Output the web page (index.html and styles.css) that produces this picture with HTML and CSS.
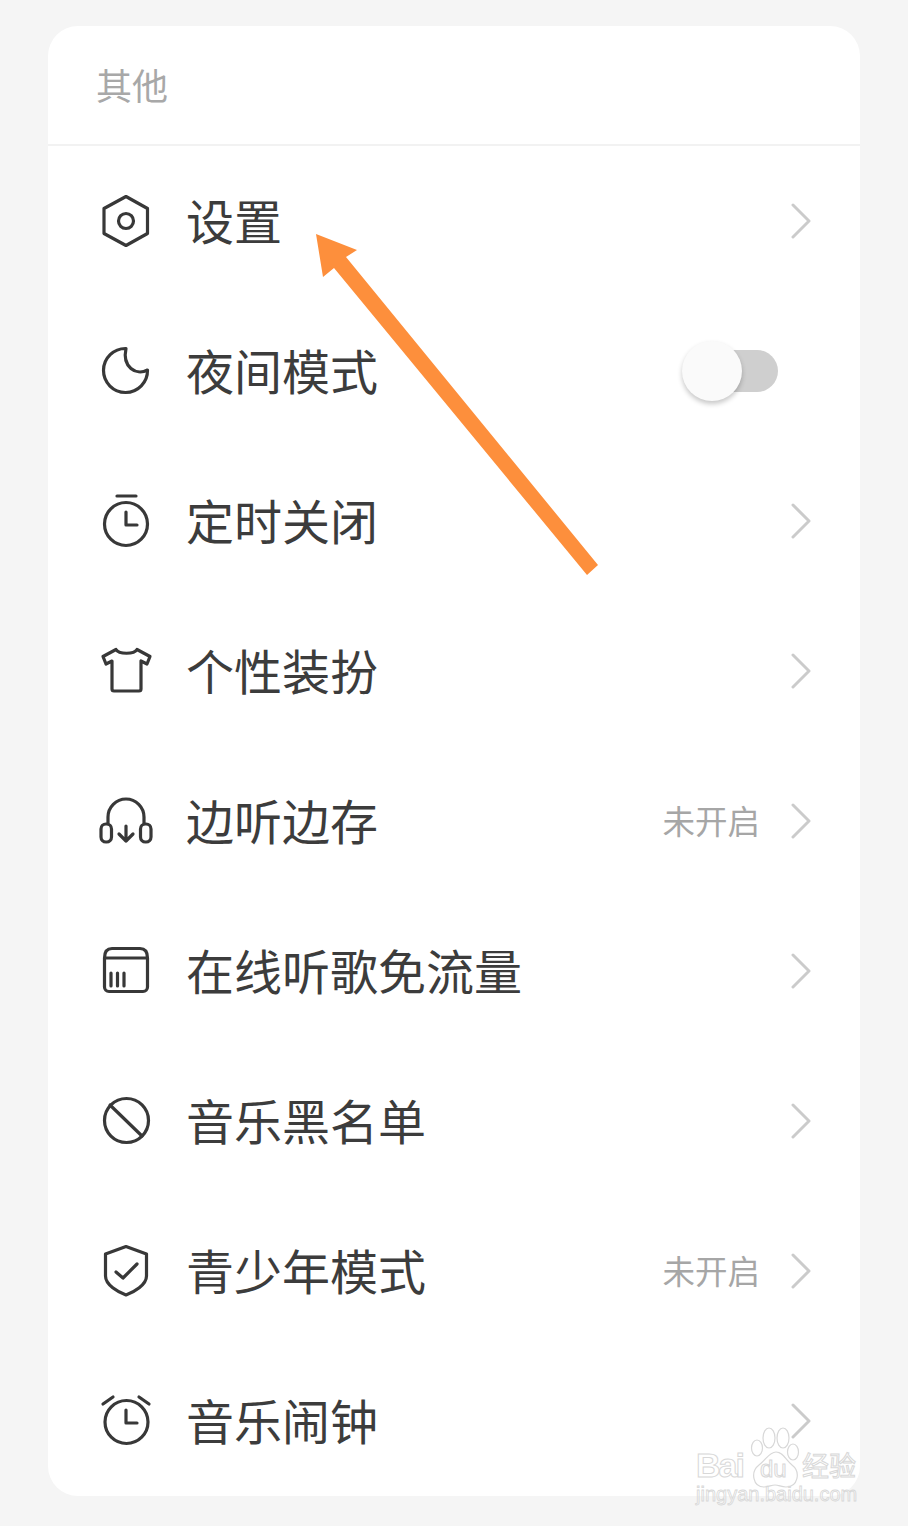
FILE: index.html
```html
<!DOCTYPE html>
<html lang="zh-CN">
<head>
    <meta charset="UTF-8">
    <meta name="viewport" content="width=device-width, initial-scale=1.0">
    <title>其他</title>
    <link rel="stylesheet" href="styles.css">
</head>
<body>
    <div class="card">
        <div class="card-title">其他</div>

        <div class="row">
            <svg class="icon" viewBox="0 0 56 56"><path d="M28 3.5 L49.5 15.5 V40.5 L28 52.5 L6 40.5 V15.5 Z"/><circle cx="28" cy="28" r="7.5"/></svg>
            <span class="row-label">设置</span>
            <svg class="chevron" viewBox="0 0 20 36"><path d="M2 2 L18 18 L2 34"/></svg>
        </div>

        <div class="row">
            <svg class="icon" viewBox="0 0 56 56"><path d="M28 5.5 A22 22 0 1 0 49.5 27 C38 33 24 24 28 5.5 Z"/></svg>
            <span class="row-label">夜间模式</span>
            <div class="toggle"><div class="toggle-knob"></div></div>
        </div>

        <div class="row">
            <svg class="icon" viewBox="0 0 56 56"><path d="M19 3 H38"/><circle cx="28" cy="31" r="21.5"/><path d="M28 19 V32 H39"/></svg>
            <span class="row-label">定时关闭</span>
            <svg class="chevron" viewBox="0 0 20 36"><path d="M2 2 L18 18 L2 34"/></svg>
        </div>

        <div class="row">
            <svg class="icon" viewBox="0 0 56 56"><path d="M18 6.5 C21 11.5 36 11.5 39 6.5 L52 13.5 L49 21 L43 18 V46 A2 2 0 0 1 41 48 H16 A2 2 0 0 1 14 46 V18 L8 21 L5 13.5 Z"/></svg>
            <span class="row-label">个性装扮</span>
            <svg class="chevron" viewBox="0 0 20 36"><path d="M2 2 L18 18 L2 34"/></svg>
        </div>

        <div class="row">
            <svg class="icon" viewBox="0 0 56 56"><path d="M10 30 V24 A18 18 0 0 1 46 24 V30"/><rect x="3" y="31" width="10.5" height="18" rx="5"/><rect x="42.5" y="31" width="10.5" height="18" rx="5"/><path d="M28 33 V48 M21 41 L28 48 L35 41"/></svg>
            <span class="row-label">边听边存</span>
            <span class="row-value">未开启</span>
            <svg class="chevron" viewBox="0 0 20 36"><path d="M2 2 L18 18 L2 34"/></svg>
        </div>

        <div class="row">
            <svg class="icon" viewBox="0 0 56 56"><path d="M6.5 15 C6.5 9 9 5.5 14 5.5 H42 C47 5.5 49.5 9 49.5 15 V44 A4.5 4.5 0 0 1 45 48.5 H11 A4.5 4.5 0 0 1 6.5 44 Z M6.5 15 H49.5 M13 30 V43 M19.5 30 V43 M26 30 V43"/></svg>
            <span class="row-label">在线听歌免流量</span>
            <svg class="chevron" viewBox="0 0 20 36"><path d="M2 2 L18 18 L2 34"/></svg>
        </div>

        <div class="row">
            <svg class="icon" viewBox="0 0 56 56"><circle cx="28.5" cy="27.5" r="22"/><path d="M12 12 L44 43"/></svg>
            <span class="row-label">音乐黑名单</span>
            <svg class="chevron" viewBox="0 0 20 36"><path d="M2 2 L18 18 L2 34"/></svg>
        </div>

        <div class="row">
            <svg class="icon" viewBox="0 0 56 56"><path d="M28 3.5 L48.5 11 V33 C48.5 42 36 49 28 52 C20 49 7.5 42 7.5 33 V11 Z"/><path d="M18 29 L25 35 L39 21"/></svg>
            <span class="row-label">青少年模式</span>
            <span class="row-value">未开启</span>
            <svg class="chevron" viewBox="0 0 20 36"><path d="M2 2 L18 18 L2 34"/></svg>
        </div>

        <div class="row">
            <svg class="icon" viewBox="0 0 56 56"><circle cx="28.5" cy="29" r="21.5"/><path d="M5 11 L15 4 M41 4 L51 11 M28 17 V30 H39"/></svg>
            <span class="row-label">音乐闹钟</span>
            <svg class="chevron" viewBox="0 0 20 36"><path d="M2 2 L18 18 L2 34"/></svg>
        </div>
    </div>

    <!-- arrow drawn on the screenshot -->
    <svg class="arrow" viewBox="0 0 908 1526"><polygon points="316,234 357,250 346,257 598,565 587,575 334,268 323,277"/></svg>

    <div class="watermark">
        <div class="wm-top">
            <span class="wm-bai">Bai</span>
            <div class="wm-paw">
                <svg viewBox="0 0 52 62"><ellipse cx="9" cy="22" rx="5.5" ry="8"/><ellipse cx="21" cy="12" rx="6" ry="10"/><ellipse cx="35" cy="12" rx="6" ry="10"/><ellipse cx="45" cy="26" rx="5.5" ry="8"/><path d="M28 26 C35 26 38 34 44 39 C53 46 50 61 38 61 C33 61 31 59 27 59 C23 59 21 61 16 61 C5 61 2 46 11 39 C18 34 21 26 28 26 Z"/></svg>
                <span class="wm-du">du</span>
            </div>
            <span class="wm-cn">经验</span>
        </div>
        <div class="wm-url">jingyan.baidu.com</div>
    </div>
</body>
</html>
```

FILE: styles.css
```css
body { margin: 0; height: 1526px; background: #f5f5f5; font-family: "Noto Sans CJK SC", "Noto Sans", sans-serif; color: #333; position: relative; overflow: hidden; }

.card { margin: 26px 48px 30px; background: #fff; border-radius: 30px; overflow: hidden; }
.card-title { height: 118px; border-bottom: 2px solid #f2f2f2; padding-left: 48px; font-size: 36px; line-height: 116px; color: #a8a8a8; }

.row { height: 150px; display: flex; align-items: center; padding: 0 49px 0 50px; }
.row-label { font-size: 48px; line-height: 60px; margin-left: 32px; margin-bottom: 5px; color: #3c3c3c; }
.row-value { margin-left: auto; margin-right: 31px; margin-bottom: 3px; font-size: 32.5px; color: #a6a6a6; }
.row-value + .chevron { margin-left: 0; }

.icon { width: 56px; height: 56px; flex: none; fill: none; stroke: #383838; stroke-width: 3.2; stroke-linecap: round; stroke-linejoin: round; }
.chevron { width: 20px; height: 36px; flex: none; margin-left: auto; fill: none; stroke: #cbcbcb; stroke-width: 3; stroke-linecap: round; stroke-linejoin: round; }

.toggle { position: relative; width: 84px; height: 42px; margin-left: auto; margin-right: 33px; border-radius: 21px; background: #cfcfcf; }
.toggle-knob { position: absolute; left: -12px; top: -9px; width: 60px; height: 60px; border-radius: 50%; background: #fafafa; box-shadow: 0 3px 5px rgba(0, 0, 0, 0.22); }

.arrow { position: absolute; left: 0; top: 0; width: 908px; height: 1526px; fill: #fd8f3c; pointer-events: none; }

.watermark { position: absolute; left: 696px; top: 1426px; width: 164px; color: transparent; }
.wm-top { display: flex; align-items: flex-end; height: 62px; }
.wm-bai { font-family: "Liberation Sans", sans-serif; font-weight: 700; font-size: 34px; line-height: 38px; width: 52px; flex: none; margin-bottom: 4px; letter-spacing: -2px; -webkit-text-stroke: 1px #d8d8d8; }
.wm-paw { position: relative; width: 52px; height: 62px; flex: none; }
.wm-paw svg { display: block; width: 52px; height: 62px; fill: rgba(255, 255, 255, 0.6); stroke: #d8d8d8; stroke-width: 1.2; }
.wm-du { position: absolute; left: 12px; bottom: 5px; font-family: "Liberation Sans", sans-serif; font-size: 24px; line-height: 28px; -webkit-text-stroke: 1px #d8d8d8; }
.wm-cn { font-size: 27px; line-height: 38px; margin-left: 2px; margin-bottom: 4px; -webkit-text-stroke: 1px #d8d8d8; }
.wm-url { font-family: "Liberation Sans", sans-serif; font-size: 20px; line-height: 24px; margin-top: -6px; -webkit-text-stroke: 0.8px #d8d8d8; }
```
